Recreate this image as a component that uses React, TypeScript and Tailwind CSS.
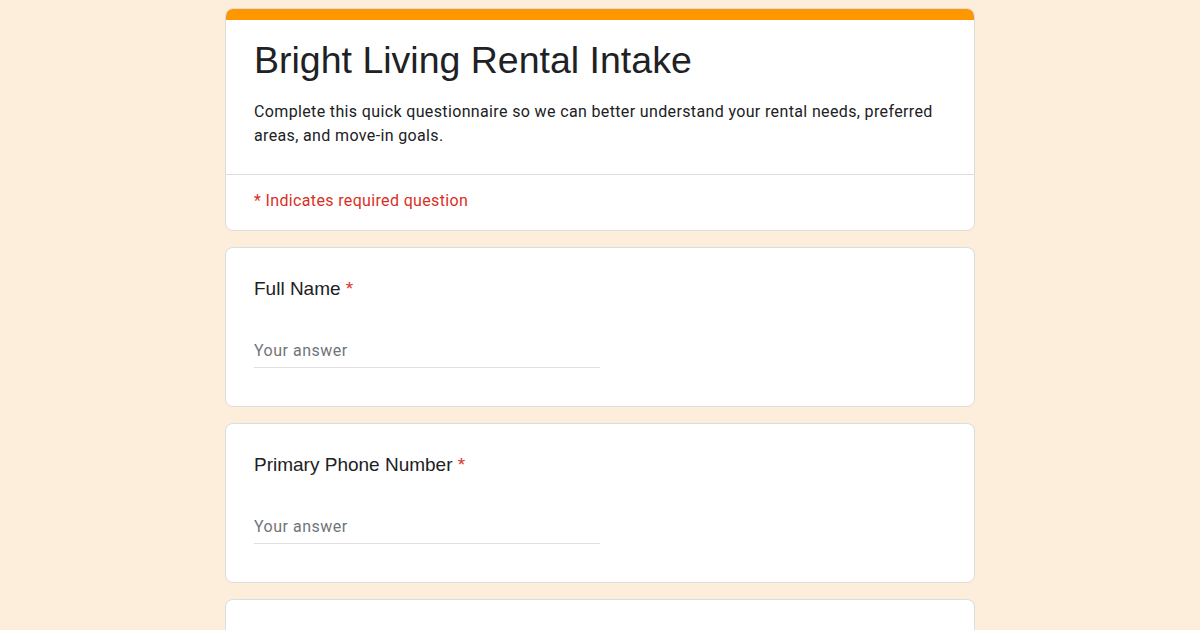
import React from "react";

function Question({ label }: { label: string }) {
  return (
    <div className="bg-white border border-[#dadce0] rounded-lg px-7 pt-[29px] pb-[38px]">
      <div className="text-[19px] leading-6 text-[#202124] font-['Liberation_Sans',Arial,sans-serif]">
        {label} <span className="text-[#d93025]">*</span>
      </div>
      <div className="mt-[38px] w-[346px] border-b border-[#e0e0e0] pb-1">
        <div className="text-[16px] leading-6 tracking-[0.5px] text-[#70757a] font-['Roboto',sans-serif]">Your answer</div>
      </div>
    </div>
  );
}

export default function App() {
  return (
    <div className="min-h-screen bg-[#fdeedb] pt-2 pb-10">
      <div className="w-[750px] mx-auto flex flex-col gap-4">
        <div className="bg-white border border-[#dadce0] rounded-lg overflow-hidden">
          <div className="h-[12px] bg-[#ff9800] -mx-px -mt-px"></div>
          <div className="px-7 pt-[18px] pb-[26px] border-b border-[#dadce0]">
            <h1 className="text-[37.5px] leading-[44px] text-[#202124] font-['Liberation_Sans',Arial,sans-serif]">
              Bright Living Rental Intake
            </h1>
            <p className="mt-[18px] text-[16px] leading-6 tracking-[0.36px] text-[#202124] font-['Roboto',sans-serif]">
              Complete this quick questionnaire so we can better understand your rental needs, preferred areas, and move-in goals.
            </p>
          </div>
          <div className="px-7 pt-[14px] pb-[17px] text-[16px] leading-6 tracking-[0.35px] text-[#d93025] font-['Roboto',sans-serif]">
            * Indicates required question
          </div>
        </div>
        <Question label="Full Name" />
        <Question label="Primary Phone Number" />
        <div className="bg-white border border-[#dadce0] rounded-lg h-[160px]"></div>
      </div>
    </div>
  );
}
